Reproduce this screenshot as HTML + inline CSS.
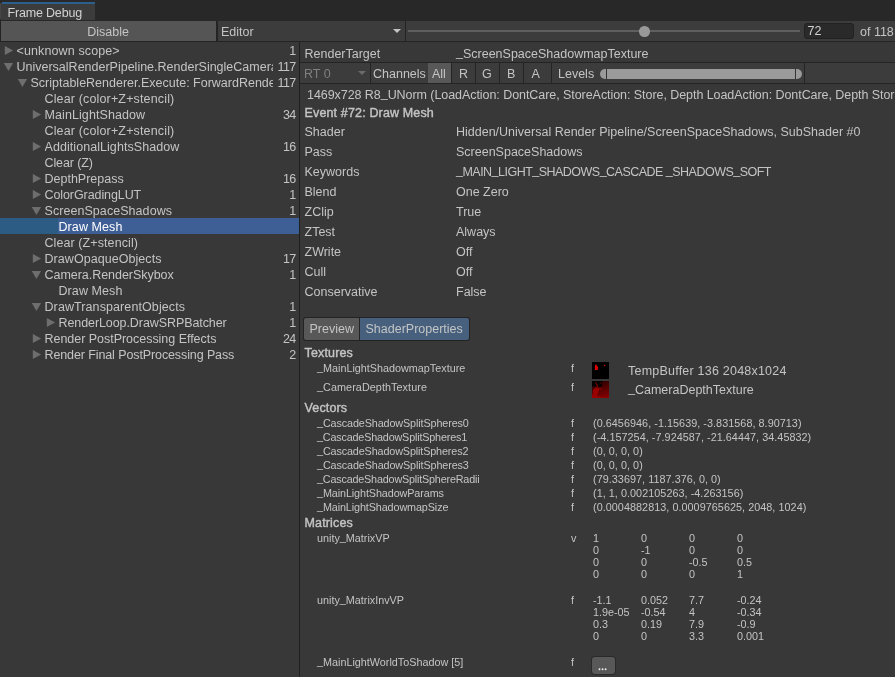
<!DOCTYPE html>
<html><head><meta charset="utf-8"><style>
*{box-sizing:border-box;margin:0;padding:0}
html,body{width:895px;height:677px;overflow:hidden;background:#383838}
body{position:relative;font-family:"Liberation Sans",sans-serif;font-size:12.5px;color:#c4c4c4}
.a{position:absolute;white-space:pre;line-height:1}
.bx{position:absolute}
#root{position:absolute;left:0;top:0;width:895px;height:677px;background:#383838;will-change:transform;overflow:hidden}
.u{position:relative;top:-2px}
.u2{position:relative;top:-1px}
.b{-webkit-text-stroke:0.4px #c4c4c4;letter-spacing:0.15px}
.tr{position:absolute;width:0;height:0;border-top:4.6px solid transparent;border-bottom:4.6px solid transparent;border-left:8.5px solid #6e6e6e}
.td{position:absolute;width:0;height:0;border-left:4.75px solid transparent;border-right:4.75px solid transparent;border-top:8.4px solid #6e6e6e}
</style></head><body><div id="root">
<div class="bx" style="left:0px;top:0px;width:895px;height:21px;background:#282828"></div>
<div class="bx" style="left:1px;top:2px;width:94px;height:18px;background:#3c3c3c;border-top-left-radius:3px;border-top-right-radius:1px"></div>
<div class="bx" style="left:2px;top:2px;width:93px;height:2px;background:#2c5e8e"></div>
<div class="a " style="left:7.5px;top:7px;color:#d2d2d2;letter-spacing:-0.18px">Frame Debug</div>
<div class="bx" style="left:0px;top:3px;width:1px;height:16px;background:#464646"></div>
<div class="bx" style="left:0px;top:21px;width:895px;height:21px;background:#3c3c3c;border-bottom:1px solid #242424"></div>
<div class="bx" style="left:0px;top:21px;width:1px;height:20px;background:#232323"></div>
<div class="bx" style="left:1px;top:21px;width:215px;height:20px;background:#555555"></div>
<div class="bx" style="left:216px;top:21px;width:2px;height:20px;background:#242424"></div>
<div class="a " style="left:87.3px;top:26px;">Disable</div>
<div class="a " style="left:221px;top:26px;">Editor</div>
<div class="bx" style="left:393px;top:29px;width:0px;height:0px;border-left:4.5px solid transparent;border-right:4.5px solid transparent;border-top:4.4px solid #c4c4c4"></div>
<div class="bx" style="left:405px;top:21px;width:1px;height:20px;background:#242424"></div>
<div class="bx" style="left:408px;top:30px;width:392px;height:2px;background:#5f5f5f"></div>
<div class="bx" style="left:639px;top:26px;width:10.5px;height:10.5px;border-radius:50%;background:#999"></div>
<div class="bx" style="left:804px;top:23px;width:50px;height:16px;background:#2a2a2a;border:1px solid #212121;border-radius:3px"></div>
<div class="a " style="left:807.5px;top:25px;color:#d2d2d2">72</div>
<div class="a " style="left:860px;top:26px;">of 118</div>
<div class="bx" style="left:299px;top:42px;width:1px;height:635px;background:#1f1f1f"></div>
<svg class="bx" style="left:0px;top:42px" width="16" height="16"><polygon points="4.8,4 13.1,8.55 4.8,13.1" fill="#6e6e6e"/></svg>
<div class="a" style="left:16.5px;top:45px;width:256.5px;overflow:hidden;height:16px;letter-spacing:0.121px;">&lt;unknown scope&gt;</div>
<div class="a" style="left:250px;width:45.6px;text-align:right;letter-spacing:-0.6px;top:45px">1</div>
<svg class="bx" style="left:0px;top:58px" width="16" height="16"><polygon points="3.8,4.9 13.1,4.9 8.45,13.1" fill="#6e6e6e"/></svg>
<div class="a" style="left:16.5px;top:61px;width:256.5px;overflow:hidden;height:16px;">UniversalRenderPipeline.RenderSingleCamera</div>
<div class="a" style="left:250px;width:45.6px;text-align:right;letter-spacing:-0.6px;top:61px">117</div>
<svg class="bx" style="left:14px;top:74px" width="16" height="16"><polygon points="3.8,4.9 13.1,4.9 8.45,13.1" fill="#6e6e6e"/></svg>
<div class="a" style="left:30.5px;top:77px;width:242.5px;overflow:hidden;height:16px;">ScriptableRenderer.Execute: ForwardRenderer</div>
<div class="a" style="left:250px;width:45.6px;text-align:right;letter-spacing:-0.6px;top:77px">117</div>
<div class="a" style="left:44.5px;top:93px;width:228.5px;overflow:hidden;height:16px;letter-spacing:0.150px;">Clear (color+Z+stencil)</div>
<svg class="bx" style="left:28px;top:106px" width="16" height="16"><polygon points="4.8,4 13.1,8.55 4.8,13.1" fill="#6e6e6e"/></svg>
<div class="a" style="left:44.5px;top:109px;width:228.5px;overflow:hidden;height:16px;letter-spacing:0.086px;">MainLightShadow</div>
<div class="a" style="left:250px;width:45.6px;text-align:right;letter-spacing:-0.6px;top:109px">34</div>
<div class="a" style="left:44.5px;top:125px;width:228.5px;overflow:hidden;height:16px;letter-spacing:0.150px;">Clear (color+Z+stencil)</div>
<svg class="bx" style="left:28px;top:138px" width="16" height="16"><polygon points="4.8,4 13.1,8.55 4.8,13.1" fill="#6e6e6e"/></svg>
<div class="a" style="left:44.5px;top:141px;width:228.5px;overflow:hidden;height:16px;letter-spacing:0.062px;">AdditionalLightsShadow</div>
<div class="a" style="left:250px;width:45.6px;text-align:right;letter-spacing:-0.6px;top:141px">16</div>
<div class="a" style="left:44.5px;top:157px;width:228.5px;overflow:hidden;height:16px;letter-spacing:-0.100px;">Clear (Z)</div>
<svg class="bx" style="left:28px;top:170px" width="16" height="16"><polygon points="4.8,4 13.1,8.55 4.8,13.1" fill="#6e6e6e"/></svg>
<div class="a" style="left:44.5px;top:173px;width:228.5px;overflow:hidden;height:16px;">DepthPrepass</div>
<div class="a" style="left:250px;width:45.6px;text-align:right;letter-spacing:-0.6px;top:173px">16</div>
<svg class="bx" style="left:28px;top:186px" width="16" height="16"><polygon points="4.8,4 13.1,8.55 4.8,13.1" fill="#6e6e6e"/></svg>
<div class="a" style="left:44.5px;top:189px;width:228.5px;overflow:hidden;height:16px;letter-spacing:-0.086px;">ColorGradingLUT</div>
<div class="a" style="left:250px;width:45.6px;text-align:right;letter-spacing:-0.6px;top:189px">1</div>
<svg class="bx" style="left:28px;top:202px" width="16" height="16"><polygon points="3.8,4.9 13.1,4.9 8.45,13.1" fill="#6e6e6e"/></svg>
<div class="a" style="left:44.5px;top:205px;width:228.5px;overflow:hidden;height:16px;letter-spacing:0.059px;">ScreenSpaceShadows</div>
<div class="a" style="left:250px;width:45.6px;text-align:right;letter-spacing:-0.6px;top:205px">1</div>
<div class="bx" style="left:0px;top:218px;width:58px;height:16px;background:#2c5b84"></div>
<div class="bx" style="left:58px;top:218px;width:241px;height:16px;background:#3d5f96"></div>
<div class="a" style="left:58.5px;top:221px;width:214.5px;overflow:hidden;height:16px;color:#ffffff;letter-spacing:0.087px;">Draw Mesh</div>
<div class="a" style="left:44.5px;top:237px;width:228.5px;overflow:hidden;height:16px;letter-spacing:0.087px;">Clear (Z+stencil)</div>
<svg class="bx" style="left:28px;top:250px" width="16" height="16"><polygon points="4.8,4 13.1,8.55 4.8,13.1" fill="#6e6e6e"/></svg>
<div class="a" style="left:44.5px;top:253px;width:228.5px;overflow:hidden;height:16px;letter-spacing:0.056px;">DrawOpaqueObjects</div>
<div class="a" style="left:250px;width:45.6px;text-align:right;letter-spacing:-0.6px;top:253px">17</div>
<svg class="bx" style="left:28px;top:266px" width="16" height="16"><polygon points="3.8,4.9 13.1,4.9 8.45,13.1" fill="#6e6e6e"/></svg>
<div class="a" style="left:44.5px;top:269px;width:228.5px;overflow:hidden;height:16px;letter-spacing:-0.039px;">Camera.RenderSkybox</div>
<div class="a" style="left:250px;width:45.6px;text-align:right;letter-spacing:-0.6px;top:269px">1</div>
<div class="a" style="left:58.5px;top:285px;width:214.5px;overflow:hidden;height:16px;letter-spacing:0.087px;">Draw Mesh</div>
<svg class="bx" style="left:28px;top:298px" width="16" height="16"><polygon points="3.8,4.9 13.1,4.9 8.45,13.1" fill="#6e6e6e"/></svg>
<div class="a" style="left:44.5px;top:301px;width:228.5px;overflow:hidden;height:16px;letter-spacing:0.095px;">DrawTransparentObjects</div>
<div class="a" style="left:250px;width:45.6px;text-align:right;letter-spacing:-0.6px;top:301px">1</div>
<svg class="bx" style="left:42px;top:314px" width="16" height="16"><polygon points="4.8,4 13.1,8.55 4.8,13.1" fill="#6e6e6e"/></svg>
<div class="a" style="left:58.5px;top:317px;width:214.5px;overflow:hidden;height:16px;letter-spacing:-0.083px;">RenderLoop.DrawSRPBatcher</div>
<div class="a" style="left:250px;width:45.6px;text-align:right;letter-spacing:-0.6px;top:317px">1</div>
<svg class="bx" style="left:28px;top:330px" width="16" height="16"><polygon points="4.8,4 13.1,8.55 4.8,13.1" fill="#6e6e6e"/></svg>
<div class="a" style="left:44.5px;top:333px;width:228.5px;overflow:hidden;height:16px;letter-spacing:-0.029px;">Render PostProcessing Effects</div>
<div class="a" style="left:250px;width:45.6px;text-align:right;letter-spacing:-0.6px;top:333px">24</div>
<svg class="bx" style="left:28px;top:346px" width="16" height="16"><polygon points="4.8,4 13.1,8.55 4.8,13.1" fill="#6e6e6e"/></svg>
<div class="a" style="left:44.5px;top:349px;width:228.5px;overflow:hidden;height:16px;letter-spacing:-0.106px;">Render Final PostProcessing Pass</div>
<div class="a" style="left:250px;width:45.6px;text-align:right;letter-spacing:-0.6px;top:349px">2</div>
<div class="bx" style="left:300px;top:62px;width:595px;height:1px;background:#242424"></div>
<div class="a " style="left:304.5px;top:48px;">RenderTarget</div>
<div class="a " style="left:456px;top:48px;"><span class=u>_</span>ScreenSpaceShadowmapTexture</div>
<div class="bx" style="left:300px;top:63px;width:595px;height:20px;background:#3c3c3c"></div>
<div class="bx" style="left:300px;top:83px;width:595px;height:1px;background:#242424"></div>
<div class="a " style="left:304px;top:68px;color:#7f7f7f">RT 0</div>
<div class="bx" style="left:358px;top:71px;width:0px;height:0px;border-left:4px solid transparent;border-right:4px solid transparent;border-top:4.5px solid #6b6b6b"></div>
<div class="bx" style="left:370px;top:63px;width:1px;height:20px;background:#242424"></div>
<div class="a " style="left:373px;top:68px;">Channels</div>
<div class="bx" style="left:428px;top:63px;width:23px;height:20px;background:#585858"></div>
<div class="a " style="left:432px;top:68px;">All</div>
<div class="bx" style="left:451px;top:63px;width:1px;height:20px;background:#242424"></div>
<div class="bx" style="left:475px;top:63px;width:1px;height:20px;background:#242424"></div>
<div class="bx" style="left:499px;top:63px;width:1px;height:20px;background:#242424"></div>
<div class="bx" style="left:523px;top:63px;width:1px;height:20px;background:#242424"></div>
<div class="bx" style="left:551px;top:63px;width:1px;height:20px;background:#242424"></div>
<div class="a " style="left:459px;top:68px;">R</div>
<div class="a " style="left:482px;top:68px;">G</div>
<div class="a " style="left:507px;top:68px;">B</div>
<div class="a " style="left:531.5px;top:68px;">A</div>
<div class="a " style="left:558px;top:68px;">Levels</div>
<div class="bx" style="left:600px;top:69px;width:202px;height:10px;background:#9a9a9a;border-radius:5px"></div>
<div class="bx" style="left:606px;top:69px;width:1px;height:10px;background:#333"></div>
<div class="bx" style="left:795px;top:69px;width:1px;height:10px;background:#333"></div>
<div class="bx" style="left:804px;top:63px;width:1px;height:20px;background:#242424"></div>
<div class="a " style="left:307px;top:89px;letter-spacing:-0.06px">1469x728 R8<span class=u>_</span>UNorm (LoadAction: DontCare, StoreAction: Store, Depth LoadAction: DontCare, Depth Store</div>
<div class="a b" style="left:304.5px;top:107px;">Event #72: Draw Mesh</div>
<div class="a " style="left:304.5px;top:126px;">Shader</div>
<div class="a " style="left:456px;top:126px;">Hidden/Universal Render Pipeline/ScreenSpaceShadows, SubShader #0</div>
<div class="a " style="left:304.5px;top:146px;">Pass</div>
<div class="a " style="left:456px;top:146px;">ScreenSpaceShadows</div>
<div class="a " style="left:304.5px;top:166px;">Keywords</div>
<div class="a " style="left:456px;top:166px;letter-spacing:-0.52px"><span class=u>_</span>MAIN<span class=u>_</span>LIGHT<span class=u>_</span>SHADOWS<span class=u>_</span>CASCADE <span class=u>_</span>SHADOWS<span class=u>_</span>SOFT</div>
<div class="a " style="left:304.5px;top:186px;">Blend</div>
<div class="a " style="left:456px;top:186px;">One Zero</div>
<div class="a " style="left:304.5px;top:206px;">ZClip</div>
<div class="a " style="left:456px;top:206px;">True</div>
<div class="a " style="left:304.5px;top:226px;">ZTest</div>
<div class="a " style="left:456px;top:226px;">Always</div>
<div class="a " style="left:304.5px;top:246px;">ZWrite</div>
<div class="a " style="left:456px;top:246px;">Off</div>
<div class="a " style="left:304.5px;top:266px;">Cull</div>
<div class="a " style="left:456px;top:266px;">Off</div>
<div class="a " style="left:304.5px;top:286px;">Conservative</div>
<div class="a " style="left:456px;top:286px;">False</div>
<div class="bx" style="left:303px;top:317px;width:167px;height:24px;background:#232323;border-radius:3px"></div>
<div class="bx" style="left:304px;top:318px;width:55px;height:22px;background:#585858;border-radius:2px 0 0 2px"></div>
<div class="bx" style="left:360px;top:318px;width:109px;height:22px;background:#46607e;border-radius:0 2px 2px 0"></div>
<div class="a " style="left:309.5px;top:323px;">Preview</div>
<div class="a " style="left:365.5px;top:323px;">ShaderProperties</div>
<div class="a b" style="left:304.5px;top:347px;">Textures</div>
<div class="a " style="left:317px;top:363px;font-size:10.8px;"><span class=u2>_</span>MainLightShadowmapTexture</div>
<div class="a " style="left:571px;top:363px;font-size:10.8px;">f</div>
<svg class="bx" style="left:592px;top:362px" width="17" height="17" viewBox="0 0 17 17"><rect width="17" height="17" fill="#000"/><path d="M3.2 2.8 L4.8 2.8 L5 4.2 L6.2 4.8 L6 5.6 L5.8 8 L3 8 L2.8 5 Z" fill="#e00000"/><rect x="12" y="2.8" width="1.3" height="1.3" fill="#d00000"/></svg>
<div class="a " style="left:628px;top:365px;letter-spacing:0.22px">TempBuffer 136 2048x1024</div>
<div class="a " style="left:317px;top:382px;font-size:10.8px;letter-spacing:0.07px"><span class=u2>_</span>CameraDepthTexture</div>
<div class="a " style="left:571px;top:382px;font-size:10.8px;">f</div>
<svg class="bx" style="left:592px;top:381px" width="17" height="17" viewBox="0 0 17 17"><defs><linearGradient id="g2" x1="0.6" y1="0" x2="0.9" y2="1"><stop offset="0" stop-color="#300000"/><stop offset="1" stop-color="#8a0000"/></linearGradient></defs><rect width="17" height="17" fill="url(#g2)"/><path d="M0 0 H10 V5.5 H0 Z" fill="#000"/><path d="M0 17 V14 L1 13 L1 9 L2.5 7.5 L4 6.2 L6 6.5 L6.5 7.5 L10 7.6 L10 8.6 L6.8 8.8 L6.5 11 L5.5 13 L5 15 L9 16 L17 17 Z" fill="#9a0000"/><path d="M3 1 L4 1 L5 3 L6 4.5 L6 5.8 L5 5.8 L4.5 4 Z" fill="#8a0000"/><rect x="8" y="1.6" width="1.2" height="1.2" fill="#6a0000"/></svg>
<div class="a " style="left:628px;top:384px;"><span class=u>_</span>CameraDepthTexture</div>
<div class="a b" style="left:304.5px;top:402px;">Vectors</div>
<div class="a " style="left:317px;top:418px;font-size:10.8px;letter-spacing:-0.115px"><span class=u2>_</span>CascadeShadowSplitSpheres0</div>
<div class="a " style="left:571px;top:418px;font-size:10.8px;">f</div>
<div class="a " style="left:593px;top:418px;font-size:10.8px;letter-spacing:0.05px">(0.6456946, -1.15639, -3.831568, 8.90713)</div>
<div class="a " style="left:317px;top:432px;font-size:10.8px;letter-spacing:-0.18px"><span class=u2>_</span>CascadeShadowSplitSpheres1</div>
<div class="a " style="left:571px;top:432px;font-size:10.8px;">f</div>
<div class="a " style="left:593px;top:432px;font-size:10.8px;letter-spacing:0.05px">(-4.157254, -7.924587, -21.64447, 34.45832)</div>
<div class="a " style="left:317px;top:446px;font-size:10.8px;letter-spacing:-0.13px"><span class=u2>_</span>CascadeShadowSplitSpheres2</div>
<div class="a " style="left:571px;top:446px;font-size:10.8px;">f</div>
<div class="a " style="left:593px;top:446px;font-size:10.8px;letter-spacing:0.05px">(0, 0, 0, 0)</div>
<div class="a " style="left:317px;top:460px;font-size:10.8px;letter-spacing:-0.115px"><span class=u2>_</span>CascadeShadowSplitSpheres3</div>
<div class="a " style="left:571px;top:460px;font-size:10.8px;">f</div>
<div class="a " style="left:593px;top:460px;font-size:10.8px;letter-spacing:0.05px">(0, 0, 0, 0)</div>
<div class="a " style="left:317px;top:474px;font-size:10.8px;letter-spacing:-0.19px"><span class=u2>_</span>CascadeShadowSplitSphereRadii</div>
<div class="a " style="left:571px;top:474px;font-size:10.8px;">f</div>
<div class="a " style="left:593px;top:474px;font-size:10.8px;letter-spacing:0.05px">(79.33697, 1187.376, 0, 0)</div>
<div class="a " style="left:317px;top:488px;font-size:10.8px;letter-spacing:-0.1px"><span class=u2>_</span>MainLightShadowParams</div>
<div class="a " style="left:571px;top:488px;font-size:10.8px;">f</div>
<div class="a " style="left:593px;top:488px;font-size:10.8px;letter-spacing:0.05px">(1, 1, 0.002105263, -4.263156)</div>
<div class="a " style="left:317px;top:502px;font-size:10.8px;letter-spacing:-0.11px"><span class=u2>_</span>MainLightShadowmapSize</div>
<div class="a " style="left:571px;top:502px;font-size:10.8px;">f</div>
<div class="a " style="left:593px;top:502px;font-size:10.8px;letter-spacing:0.05px">(0.0004882813, 0.0009765625, 2048, 1024)</div>
<div class="a b" style="left:304.5px;top:517px;">Matrices</div>
<div class="a " style="left:317px;top:533px;font-size:10.8px;">unity<span class=u2>_</span>MatrixVP</div>
<div class="a " style="left:571px;top:533px;font-size:10.8px;">v</div>
<div class="a " style="left:593px;top:533px;font-size:10.8px;">1</div>
<div class="a " style="left:641px;top:533px;font-size:10.8px;">0</div>
<div class="a " style="left:689px;top:533px;font-size:10.8px;">0</div>
<div class="a " style="left:737px;top:533px;font-size:10.8px;">0</div>
<div class="a " style="left:593px;top:545px;font-size:10.8px;">0</div>
<div class="a " style="left:641px;top:545px;font-size:10.8px;">-1</div>
<div class="a " style="left:689px;top:545px;font-size:10.8px;">0</div>
<div class="a " style="left:737px;top:545px;font-size:10.8px;">0</div>
<div class="a " style="left:593px;top:557px;font-size:10.8px;">0</div>
<div class="a " style="left:641px;top:557px;font-size:10.8px;">0</div>
<div class="a " style="left:689px;top:557px;font-size:10.8px;">-0.5</div>
<div class="a " style="left:737px;top:557px;font-size:10.8px;">0.5</div>
<div class="a " style="left:593px;top:569px;font-size:10.8px;">0</div>
<div class="a " style="left:641px;top:569px;font-size:10.8px;">0</div>
<div class="a " style="left:689px;top:569px;font-size:10.8px;">0</div>
<div class="a " style="left:737px;top:569px;font-size:10.8px;">1</div>
<div class="a " style="left:317px;top:595px;font-size:10.8px;">unity<span class=u2>_</span>MatrixInvVP</div>
<div class="a " style="left:571px;top:595px;font-size:10.8px;">f</div>
<div class="a " style="left:593px;top:595px;font-size:10.8px;">-1.1</div>
<div class="a " style="left:641px;top:595px;font-size:10.8px;">0.052</div>
<div class="a " style="left:689px;top:595px;font-size:10.8px;">7.7</div>
<div class="a " style="left:737px;top:595px;font-size:10.8px;">-0.24</div>
<div class="a " style="left:593px;top:607px;font-size:10.8px;">1.9e-05</div>
<div class="a " style="left:641px;top:607px;font-size:10.8px;">-0.54</div>
<div class="a " style="left:689px;top:607px;font-size:10.8px;">4</div>
<div class="a " style="left:737px;top:607px;font-size:10.8px;">-0.34</div>
<div class="a " style="left:593px;top:619px;font-size:10.8px;">0.3</div>
<div class="a " style="left:641px;top:619px;font-size:10.8px;">0.19</div>
<div class="a " style="left:689px;top:619px;font-size:10.8px;">7.9</div>
<div class="a " style="left:737px;top:619px;font-size:10.8px;">-0.9</div>
<div class="a " style="left:593px;top:631px;font-size:10.8px;">0</div>
<div class="a " style="left:641px;top:631px;font-size:10.8px;">0</div>
<div class="a " style="left:689px;top:631px;font-size:10.8px;">3.3</div>
<div class="a " style="left:737px;top:631px;font-size:10.8px;">0.001</div>
<div class="a " style="left:317px;top:657px;font-size:10.8px;"><span class=u2>_</span>MainLightWorldToShadow [5]</div>
<div class="a " style="left:571px;top:657px;font-size:10.8px;">f</div>
<div class="bx" style="left:591px;top:656px;width:25px;height:19px;background:#2a2a2a;border-radius:4px"></div>
<div class="bx" style="left:592px;top:657px;width:23px;height:17px;background:#585858;border-radius:3px"></div>
<svg class="bx" style="left:594px;top:664px" width="16" height="10"><circle cx="5.5" cy="5.3" r="0.95" fill="#f0f0f0"/><circle cx="8.55" cy="5.3" r="0.95" fill="#f0f0f0"/><circle cx="11.6" cy="5.3" r="0.95" fill="#f0f0f0"/></svg>
</div></body></html>
